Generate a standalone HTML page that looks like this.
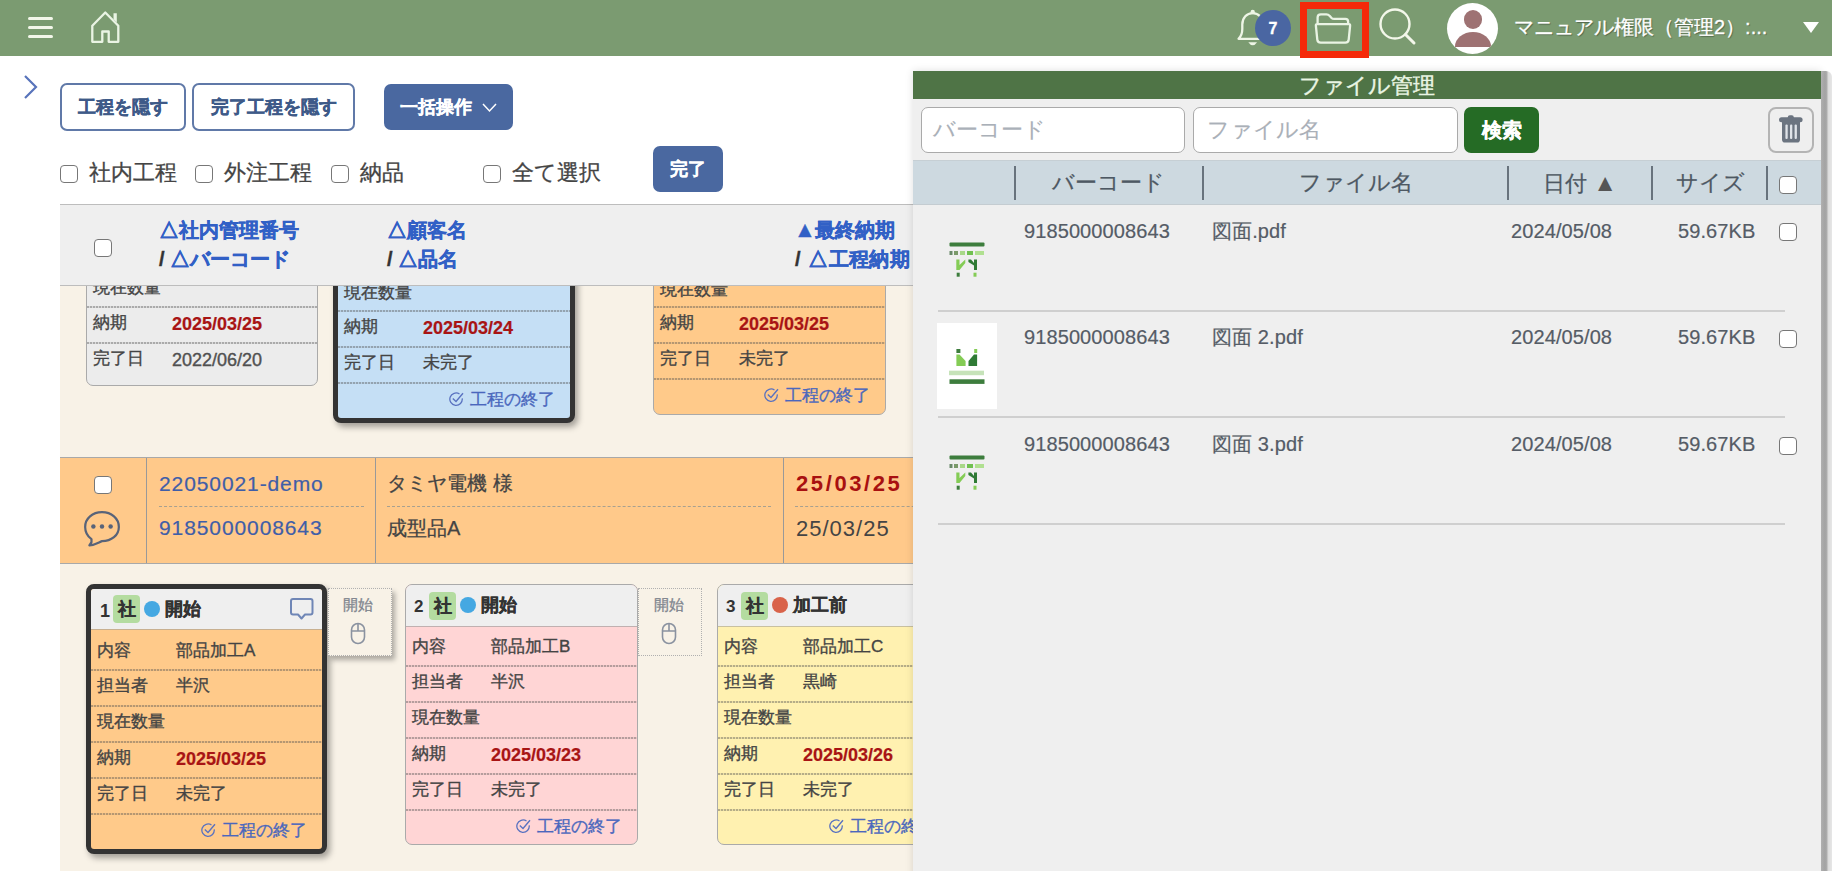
<!DOCTYPE html>
<html><head><meta charset="utf-8">
<style>
*{box-sizing:border-box;margin:0;padding:0}
html,body{width:1832px;height:871px;overflow:hidden;background:#fff;font-family:"Liberation Sans",sans-serif;color:#444}
.a{position:absolute}
#top{left:0;top:0;width:1832px;height:56px;background:#7b9b71}
.hb{left:28px;width:25px;height:2.6px;background:#f3f7ea;border-radius:2px}
.btno{border:2px solid #6079a8;border-radius:7px;background:#fff;color:#3e5a88;font-weight:bold;font-size:18px;text-align:center;line-height:44px;-webkit-text-stroke:0.4px #3e5a88}
.btnb{background:#4a68a0;border-radius:7px;color:#fff;font-weight:bold;font-size:18px;-webkit-text-stroke:0.3px #fff}
.cb{width:18px;height:18px;border:1.5px solid #777;border-radius:4px;background:#fff}
.lbl{font-size:22px;color:#444;line-height:22px;-webkit-text-stroke:0.3px #444}
.hdr{font-size:20px;font-weight:bold;color:#3160c6;line-height:20px;white-space:nowrap;-webkit-text-stroke:0.4px #3160c6}
.hdr i{font-style:normal;color:#333;-webkit-text-stroke:0.4px #333}
.card{border:1px solid #aaa;border-radius:7px;overflow:hidden}
.row{position:absolute;left:0;right:0;height:36px;font-size:17px;color:#444;white-space:nowrap;-webkit-text-stroke:0.35px #444}
.row::before{content:"";position:absolute;left:0;right:0;top:0;height:2px;background:repeating-linear-gradient(90deg,rgba(80,80,80,.42) 0 2px,rgba(80,80,80,.12) 2px 3px)}
.row.f::before{display:none}
.row.f .k,.row.f .v{top:9px}
.k{position:absolute;left:6px;top:8px;line-height:17px}
.v{position:absolute;left:85px;top:8px;line-height:17px}
.red{color:#a81414;font-weight:bold;font-size:18px;-webkit-text-stroke:0.2px #a81414}
.dt{font-size:18px;color:#555}
.v.red,.v.dt{top:10px}
.end{position:absolute;right:15px;top:9px;font-size:17px;color:#4a67bd;line-height:17px;-webkit-text-stroke:0.35px #4a67bd}
.ph{font-size:22px;color:#aab0b8;line-height:22px;-webkit-text-stroke:0.15px #aab0b8}
.th{font-size:22px;color:#4d5863;line-height:22px;white-space:nowrap;-webkit-text-stroke:0.25px #4d5863}
.sep{width:1.7px;height:34px;background:#68737d;top:166px}
.td{font-size:20px;color:#555c66;line-height:20px;white-space:nowrap;letter-spacing:0.1px;-webkit-text-stroke:0.2px #555c66}
</style></head><body>
<!-- top bar -->
<div id="top" class="a">
  <div class="a hb" style="top:17px"></div>
  <div class="a hb" style="top:26px"></div>
  <div class="a hb" style="top:35px"></div>
  <svg class="a" style="left:90px;top:10px" width="32" height="35" viewBox="0 0 32 35"><path d="M2.3 31.8V15.8L15.3 2.5L28.3 15.8V31.8H18.7V21.5H12.3V31.8Z" fill="none" stroke="#eaf4e4" stroke-width="2.3" stroke-linejoin="round"/><path d="M23.5 3.2H26.8V12.5L23.5 9.2Z" fill="#eaf4e4"/></svg>
  <!-- bell -->
  <svg class="a" style="left:1236px;top:9px" width="34" height="40" viewBox="0 0 34 40"><path d="M2.5 29.8C5 27.5 6.3 24.5 6.3 20V15.5C6.3 8.8 10.8 4.2 16.7 4.2C22.6 4.2 27 8.8 27 15.5V20C27 24.5 28.4 27.5 31 29.8Z" fill="none" stroke="#eef5e6" stroke-width="2.3" stroke-linejoin="round"/><path d="M12.3 33.2Q16.7 39.5 21.1 33.2Z" fill="#eef5e6"/><circle cx="16.7" cy="3" r="2.2" fill="#eef5e6"/></svg>
  <div class="a" style="left:1255px;top:10px;width:36px;height:36px;border-radius:50%;background:#4a66a2;color:#fff;font-weight:bold;font-size:16px;text-align:center;line-height:38px;-webkit-text-stroke:0.3px #fff">7</div>
  <div class="a" style="left:1300px;top:2px;width:69px;height:56px;border:7px solid #f52a0a"></div>
  <!-- folder -->
  <svg class="a" style="left:1314px;top:13px" width="38" height="32" viewBox="0 0 38 32"><path d="M3.6 10.6V4.6Q3.6 1.3 6.8 1.3H12.3Q14.3 1.3 15.8 3L17.3 4.7Q18.5 5.9 20.2 5.9H31.4Q34.1 5.9 34.1 8.6V10.6" fill="none" stroke="#eaf4e4" stroke-width="2.3" stroke-linejoin="round"/><path d="M3.2 11.1H34.8Q36.3 11.1 36.1 12.8L34.7 26.6Q34.4 29.6 31.3 29.6H6.7Q3.6 29.6 3.3 26.6L1.9 12.8Q1.7 11.1 3.2 11.1Z" fill="none" stroke="#eaf4e4" stroke-width="2.3" stroke-linejoin="round"/></svg>
  <!-- search -->
  <svg class="a" style="left:1378px;top:7px" width="40" height="40" viewBox="0 0 40 40"><circle cx="17" cy="17" r="14.5" fill="none" stroke="#f3f7ea" stroke-width="2.4"/><path d="M27.5 27.5L36 36" stroke="#f3f7ea" stroke-width="3" stroke-linecap="round"/></svg>
  <!-- avatar -->
  <div class="a" style="left:1447px;top:3px;width:51px;height:51px;border-radius:50%;background:#fff;overflow:hidden">
    <div class="a" style="left:16.5px;top:7px;width:18.5px;height:18.5px;border-radius:50%;background:#9e7273"></div>
    <div class="a" style="left:7.5px;top:29px;width:36.5px;height:14.8px;border-radius:50% 50% 0 0/100% 100% 0 0;background:#9e7273"></div>
  </div>
  <div class="a" style="left:1514px;top:16px;font-size:20px;line-height:22px;color:#fff;white-space:nowrap;text-shadow:1px 1px 1px rgba(0,0,0,.35);-webkit-text-stroke:0.3px #fff">マニュアル権限（管理2）:...</div>
  <svg class="a" style="left:1803px;top:22px" width="16" height="11" viewBox="0 0 16 11"><path d="M0 0H16L8 11Z" fill="#fff"/></svg>
</div>

<!-- side chevron -->
<svg class="a" style="left:22px;top:73px" width="18" height="28" viewBox="0 0 18 28"><path d="M3 3L14 14L3 25" fill="none" stroke="#5874bb" stroke-width="2.2"/></svg>

<!-- buttons -->
<div class="a btno" style="left:60px;top:83px;width:126px;height:48px">工程を隠す</div>
<div class="a btno" style="left:192px;top:83px;width:163px;height:48px">完了工程を隠す</div>
<div class="a btnb" style="left:384px;top:84px;width:129px;height:46px;line-height:46px;padding-left:16px">一括操作<svg style="position:absolute;left:98px;top:19px" width="15" height="10" viewBox="0 0 15 10"><path d="M1 1L7.5 8L14 1" fill="none" stroke="#fff" stroke-width="1.5"/></svg></div>

<div class="a cb" style="left:60px;top:165px"></div><div class="a lbl" style="left:89px;top:162px">社内工程</div>
<div class="a cb" style="left:195px;top:165px"></div><div class="a lbl" style="left:224px;top:162px">外注工程</div>
<div class="a cb" style="left:331px;top:165px"></div><div class="a lbl" style="left:360px;top:162px">納品</div>
<div class="a cb" style="left:483px;top:165px"></div><div class="a lbl" style="left:512px;top:162px">全て選択</div>
<div class="a btnb" style="left:653px;top:146px;width:70px;height:46px;line-height:46px;text-align:center">完了</div>

<!-- beige list area -->
<div class="a" style="left:60px;top:286px;width:860px;height:600px;background:#f8f2e7"></div>

<!-- top cards (scrolled) -->
<div class="a card" style="left:86px;top:250px;width:232px;height:136px;background:#ececec">
  <div class="row f" style="top:19px"><span class="k">現在数量</span></div>
  <div class="row" style="top:55px"><span class="k">納期</span><span class="v red">2025/03/25</span></div>
  <div class="row" style="top:91px"><span class="k">完了日</span><span class="v dt">2022/06/20</span></div>
</div>
<div class="a" style="left:333px;top:240px;width:242px;height:183px;background:#c5dff5;border:5px solid #333;border-radius:8px;overflow:hidden;box-shadow:3px 4px 6px rgba(0,0,0,.35)">
  <div class="row f" style="top:30px"><span class="k">現在数量</span></div>
  <div class="row" style="top:65px"><span class="k">納期</span><span class="v red">2025/03/24</span></div>
  <div class="row" style="top:101px"><span class="k">完了日</span><span class="v">未完了</span></div>
  <div class="row" style="top:137px"><span class="end"><svg width="15" height="15" viewBox="0 0 15 15" style="position:absolute;left:-21px;top:1px"><path d="M13.2 6.3A6.2 6.2 0 1 1 10.5 2" fill="none" stroke="#5a72c0" stroke-width="1.3"/><path d="M3.8 6.6L7 9.5L14 1.2" fill="none" stroke="#5a72c0" stroke-width="1.4"/></svg>工程の終了</span></div>
</div>
<div class="a card" style="left:653px;top:240px;width:233px;height:175px;background:#ffca8a">
  <div class="row f" style="top:31px"><span class="k">現在数量</span></div>
  <div class="row" style="top:65px"><span class="k">納期</span><span class="v red">2025/03/25</span></div>
  <div class="row" style="top:101px"><span class="k">完了日</span><span class="v">未完了</span></div>
  <div class="row" style="top:137px"><span class="end"><svg width="15" height="15" viewBox="0 0 15 15" style="position:absolute;left:-21px;top:1px"><path d="M13.2 6.3A6.2 6.2 0 1 1 10.5 2" fill="none" stroke="#5a72c0" stroke-width="1.3"/><path d="M3.8 6.6L7 9.5L14 1.2" fill="none" stroke="#5a72c0" stroke-width="1.4"/></svg>工程の終了</span></div>
</div>

<!-- table header -->
<div class="a" style="left:60px;top:204px;width:860px;height:82px;background:#efefef;border-top:1.5px solid #bdbdbd;border-bottom:1.5px solid #bdbdbd">
  <div class="a cb" style="left:34px;top:34px"></div>
  <div class="a hdr" style="left:99px;top:15px">△社内管理番号</div>
  <div class="a hdr" style="left:99px;top:44px"><i>/</i> △バーコード</div>
  <div class="a hdr" style="left:327px;top:15px">△顧客名</div>
  <div class="a hdr" style="left:327px;top:44px"><i>/</i> △品名</div>
  <div class="a hdr" style="left:734px;top:15px"><span style="font-size:22px;display:inline-block;margin-right:-1px">▲</span>最終納期</div>
  <div class="a hdr" style="left:735px;top:44px"><i>/</i> <span style="margin-left:2px;letter-spacing:0.4px">△工程納期</span></div>
</div>

<!-- orange row -->
<div class="a" style="left:60px;top:457px;width:860px;height:107px;background:#ffc98a;border-top:1.5px solid #a9a9a9;border-bottom:1.5px solid #a9a9a9">
  <div class="a cb" style="left:34px;top:18px"></div>
  <svg class="a" style="left:22px;top:51px" width="40" height="38" viewBox="0 0 38 36"><path d="M9 31.5L7 34.5C13 34 16 31.5 19 30.5C28 30.5 35 25 35 17C35 9 28 3 19 3C10 3 3 9 3 17C3 22 5.5 26 9 28.5Z" fill="none" stroke="#586379" stroke-width="2.1" stroke-linejoin="round"/><circle cx="10.8" cy="16.5" r="2.1" fill="#586379"/><circle cx="19" cy="16.5" r="2.1" fill="#586379"/><circle cx="27.2" cy="16.5" r="2.1" fill="#586379"/></svg>
  <div class="a" style="left:86px;top:0;width:1px;height:105px;background:#999"></div>
  <div class="a" style="left:315px;top:0;width:1px;height:105px;background:#999"></div>
  <div class="a" style="left:723px;top:0;width:1px;height:105px;background:#999"></div>
  <div class="a" style="left:99px;top:15px;font-size:21px;line-height:21px;color:#3f5ea8;white-space:nowrap;letter-spacing:0.9px;-webkit-text-stroke:0.2px #3f5ea8">22050021-demo</div>
  <div class="a" style="left:99px;top:48px;width:205px;border-top:1px dashed #a8a090"></div>
  <div class="a" style="left:99px;top:60px;font-size:21px;line-height:21px;color:#3f5ea8;letter-spacing:0.9px;margin-top:-1px;-webkit-text-stroke:0.2px #3f5ea8">9185000008643</div>
  <div class="a" style="left:327px;top:15px;font-size:20px;line-height:21px;color:#444;white-space:nowrap;-webkit-text-stroke:0.25px #444">タミヤ電機 様</div>
  <div class="a" style="left:327px;top:48px;width:384px;border-top:1px dashed #a8a090"></div>
  <div class="a" style="left:327px;top:60px;font-size:20px;line-height:21px;color:#444;-webkit-text-stroke:0.25px #444">成型品A</div>
  <div class="a" style="left:736px;top:15px;font-size:22px;line-height:21px;color:#a81010;font-weight:bold;white-space:nowrap;letter-spacing:2.6px">25/03/25</div>
  <div class="a" style="left:735px;top:48px;width:140px;border-top:1px dashed #a8a090"></div>
  <div class="a" style="left:736px;top:60px;font-size:22px;line-height:21px;color:#444;white-space:nowrap;letter-spacing:1px">25/03/25</div>
</div>

<!-- bottom cards -->
<div class="a" style="left:86px;top:584px;width:241px;height:270px;background:#ffca8a;border:5px solid #333;border-radius:8px;overflow:hidden;box-shadow:3px 4px 6px rgba(0,0,0,.35)">
  <div class="a" style="left:0;top:0;width:100%;height:41px;background:#efefef;border-bottom:1px solid #c8b090"></div>
  <div class="a" style="left:9px;top:13px;font-size:18px;font-weight:bold;color:#333;line-height:18px">1</div>
  <div class="a" style="left:22px;top:6px;width:27px;height:28px;background:#b4dca0;border-radius:4px;font-size:18px;font-weight:bold;color:#333;text-align:center;line-height:28px;-webkit-text-stroke:0.3px #333">社</div>
  <div class="a" style="left:53px;top:12px;width:16px;height:16px;border-radius:50%;background:#45a8e2"></div>
  <div class="a" style="left:74px;top:11px;font-size:18px;font-weight:bold;color:#333;line-height:18px;-webkit-text-stroke:0.3px #333">開始</div>
  <svg class="a" style="left:198px;top:8px" width="26" height="25" viewBox="0 0 26 25"><path d="M4 2H21.5Q23.5 2 23.5 4V15.5Q23.5 17.5 21.5 17.5H16L12.5 21.5L9 17.5H4Q2 17.5 2 15.5V4Q2 2 4 2Z" fill="none" stroke="#6f86b6" stroke-width="2" stroke-linejoin="round"/></svg>
  <div class="row f" style="top:44px"><span class="k">内容</span><span class="v">部品加工A</span></div>
  <div class="row" style="top:80px"><span class="k">担当者</span><span class="v">半沢</span></div>
  <div class="row" style="top:116px"><span class="k">現在数量</span></div>
  <div class="row" style="top:152px"><span class="k">納期</span><span class="v red">2025/03/25</span></div>
  <div class="row" style="top:188px"><span class="k">完了日</span><span class="v">未完了</span></div>
  <div class="row" style="top:224px"><span class="end"><svg width="15" height="15" viewBox="0 0 15 15" style="position:absolute;left:-21px;top:1px"><path d="M13.2 6.3A6.2 6.2 0 1 1 10.5 2" fill="none" stroke="#5a72c0" stroke-width="1.3"/><path d="M3.8 6.6L7 9.5L14 1.2" fill="none" stroke="#5a72c0" stroke-width="1.4"/></svg>工程の終了</span></div>
</div>
<div class="a" style="left:328px;top:588px;width:64px;height:68px;background:#f8f2e7;border:1.5px dotted #b0b0b0;box-shadow:3px 4px 5px rgba(0,0,0,.3)">
  <div class="a" style="left:14px;top:9px;font-size:14.5px;color:#80858e;line-height:15px;-webkit-text-stroke:0.3px #80858e">開始</div>
  <svg class="a" style="left:21px;top:33px" width="16" height="23" viewBox="0 0 16 23"><rect x="1.5" y="1.5" width="13" height="20" rx="6.5" fill="none" stroke="#8a92a0" stroke-width="1.6"/><path d="M8 1.5V9M1.5 9H14.5" stroke="#8a92a0" stroke-width="1.6"/></svg>
</div>

<div class="a card" style="left:405px;top:584px;width:233px;height:261px;background:#ffd5d5">
  <div class="a" style="left:0;top:0;width:100%;height:42px;background:#efefef;border-bottom:1px solid #c0b0b0"></div>
  <div class="a" style="left:8px;top:13px;font-size:17px;font-weight:bold;color:#333;line-height:17px">2</div>
  <div class="a" style="left:23px;top:7px;width:27px;height:28px;background:#b4dca0;border-radius:4px;font-size:18px;font-weight:bold;color:#333;text-align:center;line-height:28px;-webkit-text-stroke:0.3px #333">社</div>
  <div class="a" style="left:54px;top:12px;width:16px;height:16px;border-radius:50%;background:#45a8e2"></div>
  <div class="a" style="left:75px;top:11px;font-size:18px;font-weight:bold;color:#333;line-height:18px;-webkit-text-stroke:0.3px #333">開始</div>
  <div class="row f" style="top:44px"><span class="k">内容</span><span class="v">部品加工B</span></div>
  <div class="row" style="top:80px"><span class="k">担当者</span><span class="v">半沢</span></div>
  <div class="row" style="top:116px"><span class="k">現在数量</span></div>
  <div class="row" style="top:152px"><span class="k">納期</span><span class="v red">2025/03/23</span></div>
  <div class="row" style="top:188px"><span class="k">完了日</span><span class="v">未完了</span></div>
  <div class="row" style="top:224px"><span class="end"><svg width="15" height="15" viewBox="0 0 15 15" style="position:absolute;left:-21px;top:1px"><path d="M13.2 6.3A6.2 6.2 0 1 1 10.5 2" fill="none" stroke="#5a72c0" stroke-width="1.3"/><path d="M3.8 6.6L7 9.5L14 1.2" fill="none" stroke="#5a72c0" stroke-width="1.4"/></svg>工程の終了</span></div>
</div>
<div class="a" style="left:638px;top:588px;width:64px;height:68px;border:1.5px dotted #b0b0b0">
  <div class="a" style="left:15px;top:9px;font-size:14.5px;color:#80858e;line-height:15px;-webkit-text-stroke:0.3px #80858e">開始</div>
  <svg class="a" style="left:22px;top:33px" width="16" height="23" viewBox="0 0 16 23"><rect x="1.5" y="1.5" width="13" height="20" rx="6.5" fill="none" stroke="#8a92a0" stroke-width="1.6"/><path d="M8 1.5V9M1.5 9H14.5" stroke="#8a92a0" stroke-width="1.6"/></svg>
</div>

<div class="a card" style="left:717px;top:584px;width:233px;height:261px;background:#fff1b0">
  <div class="a" style="left:0;top:0;width:100%;height:42px;background:#efefef;border-bottom:1px solid #c8c0a0"></div>
  <div class="a" style="left:8px;top:13px;font-size:17px;font-weight:bold;color:#333;line-height:17px">3</div>
  <div class="a" style="left:23px;top:7px;width:27px;height:28px;background:#b4dca0;border-radius:4px;font-size:18px;font-weight:bold;color:#333;text-align:center;line-height:28px;-webkit-text-stroke:0.3px #333">社</div>
  <div class="a" style="left:54px;top:12px;width:16px;height:16px;border-radius:50%;background:#d9634a"></div>
  <div class="a" style="left:75px;top:11px;font-size:18px;font-weight:bold;color:#333;line-height:18px;-webkit-text-stroke:0.3px #333">加工前</div>
  <div class="row f" style="top:44px"><span class="k">内容</span><span class="v">部品加工C</span></div>
  <div class="row" style="top:80px"><span class="k">担当者</span><span class="v">黒崎</span></div>
  <div class="row" style="top:116px"><span class="k">現在数量</span></div>
  <div class="row" style="top:152px"><span class="k">納期</span><span class="v red">2025/03/26</span></div>
  <div class="row" style="top:188px"><span class="k">完了日</span><span class="v">未完了</span></div>
  <div class="row" style="top:224px"><span class="end" style="right:auto;left:132px"><svg width="15" height="15" viewBox="0 0 15 15" style="position:absolute;left:-21px;top:1px"><path d="M13.2 6.3A6.2 6.2 0 1 1 10.5 2" fill="none" stroke="#5a72c0" stroke-width="1.3"/><path d="M3.8 6.6L7 9.5L14 1.2" fill="none" stroke="#5a72c0" stroke-width="1.4"/></svg>工程の終了</span></div>
</div>

<!-- file panel -->
<div class="a" style="left:1821px;top:71px;width:11px;height:800px;background:linear-gradient(90deg,#bcbcbc 0,#a6a6a6 4px,#b0b0b0 6px,#dcdcdc 7px,#e6e6e6 11px);border-radius:0 6px 0 0"></div>
<div class="a" style="left:913px;top:71px;width:908px;height:820px;background:#efefef;box-shadow:0 0 8px rgba(0,0,0,.13)">
  <div class="a" style="left:0;top:0;width:908px;height:28px;background:#4f7446"></div>
  <div class="a" style="left:386px;top:3px;font-size:22px;line-height:24px;color:#eaf6e4;-webkit-text-stroke:0.4px #eaf6e4">ファイル管理</div>
  <div class="a" style="left:8px;top:36px;width:264px;height:46px;background:#fff;border:1.5px solid #aaa;border-radius:7px"></div>
  <div class="a ph" style="left:20px;top:48px">バーコード</div>
  <div class="a" style="left:280px;top:36px;width:265px;height:46px;background:#fff;border:1.5px solid #aaa;border-radius:7px"></div>
  <div class="a ph" style="left:294px;top:48px">ファイル名</div>
  <div class="a" style="left:551px;top:36px;width:75px;height:46px;background:#256b25;border-radius:7px;color:#fff;font-weight:bold;font-size:19.5px;text-align:center;line-height:46px;-webkit-text-stroke:0.4px #fff">検索</div>
  <div class="a" style="left:855px;top:36px;width:46px;height:46px;border:2px solid #b4b4b4;border-radius:8px"></div>
  <svg class="a" style="left:865px;top:44px" width="26" height="30" viewBox="0 0 26 30"><rect x="1" y="2.3" width="23.6" height="5" rx="2.5" fill="#6b7480"/><rect x="9.8" y="0.3" width="6" height="4" rx="2" fill="#6b7480"/><path d="M4 7H22V24.5Q22 27.6 19 27.6H7Q4 27.6 4 24.5Z" fill="#6b7480"/><rect x="7.4" y="9.5" width="2.3" height="14.4" rx="1" fill="#dfe3e8"/><rect x="12" y="9.5" width="2.3" height="14.4" rx="1" fill="#dfe3e8"/><rect x="16.6" y="9.5" width="2.3" height="14.4" rx="1" fill="#dfe3e8"/></svg>
  <div class="a" style="left:0;top:89px;width:908px;height:45px;background:#cdd9e0;border-top:1.5px solid #c6cfd4;border-bottom:1.5px solid #c4ccd1"></div>
  <div class="a sep" style="left:101px;top:95px"></div>
  <div class="a sep" style="left:289px;top:95px"></div>
  <div class="a sep" style="left:594px;top:95px"></div>
  <div class="a sep" style="left:738px;top:95px"></div>
  <div class="a sep" style="left:853px;top:95px"></div>
  <div class="a th" style="left:139px;top:101px">バーコード</div>
  <div class="a th" style="left:386px;top:101px">ファイル名</div>
  <div class="a th" style="left:630px;top:101px">日付 <span style="color:#555;font-size:24px;-webkit-text-stroke:0">▲</span></div>
  <div class="a th" style="left:763px;top:101px">サイズ</div>
  <div class="a cb" style="left:866px;top:105px"></div>

  <!-- rows -->
  <div class="a" style="left:25px;top:239px;width:847px;height:1.5px;background:#cfcfcf"></div>
  <div class="a" style="left:25px;top:345px;width:847px;height:1.5px;background:#cfcfcf"></div>
  <div class="a" style="left:25px;top:452px;width:847px;height:1.5px;background:#cfcfcf"></div>

  <div class="a td" style="left:111px;top:150px">9185000008643</div>
  <div class="a td" style="left:299px;top:150px">図面.pdf</div>
  <div class="a td" style="left:598px;top:150px">2024/05/08</div>
  <div class="a td" style="left:765px;top:150px">59.67KB</div>
  <div class="a cb" style="left:866px;top:152px"></div>

  <div class="a td" style="left:111px;top:256px">9185000008643</div>
  <div class="a td" style="left:299px;top:256px">図面 2.pdf</div>
  <div class="a td" style="left:598px;top:256px">2024/05/08</div>
  <div class="a td" style="left:765px;top:256px">59.67KB</div>
  <div class="a cb" style="left:866px;top:259px"></div>

  <div class="a td" style="left:111px;top:363px">9185000008643</div>
  <div class="a td" style="left:299px;top:363px">図面 3.pdf</div>
  <div class="a td" style="left:598px;top:363px">2024/05/08</div>
  <div class="a td" style="left:765px;top:363px">59.67KB</div>
  <div class="a cb" style="left:866px;top:366px"></div>

  <!-- thumbs -->
  <svg class="a" style="left:36px;top:170px" width="36" height="36" viewBox="0 0 36 36"><rect x="0.5" y="1.5" width="35" height="4" rx="1" fill="#3d7d3d"/><rect x="0.5" y="10" width="3" height="4" fill="#6a8a6a"/><rect x="5" y="10" width="4" height="4" fill="#7a9a6a"/><rect x="11" y="10" width="5" height="4" fill="#a8d888"/><rect x="18" y="10" width="6" height="4" fill="#70c050"/><rect x="26" y="10" width="9" height="4" fill="#b0e090"/><path d="M7.3 18.6H10.5V24L16.3 18.6V22L10.5 29H7.3Z" fill="#84cc55"/><path d="M19.4 18.6H22L25 22V18.6H28V29H25V24.5L19.4 21Z" fill="#2f7a35"/><rect x="7.7" y="31.7" width="3" height="4" fill="#3d7d3d"/><rect x="24.5" y="31.7" width="3" height="4" fill="#84cc55"/></svg>
  <div class="a" style="left:24px;top:252px;width:60px;height:86px;background:#fff"></div>
  <svg class="a" style="left:36px;top:277px" width="36" height="36" viewBox="0 0 36 36"><rect x="7.4" y="1" width="4" height="4" fill="#3d7d3d"/><rect x="25.2" y="1" width="3" height="4" fill="#84cc55"/><path d="M7.4 6.6H10.5L16.6 13V18.1H7.4Z" fill="#84cc55"/><path d="M28.1 6.6H25L19.5 13V18.1H28.1Z" fill="#2f7a35"/><rect x="0" y="22.7" width="35" height="4.5" fill="#b8dca8" opacity=".8"/><rect x="0.5" y="31.3" width="35" height="4.6" fill="#3d7d3d"/></svg>
  <svg class="a" style="left:36px;top:383px" width="36" height="36" viewBox="0 0 36 36"><rect x="0.5" y="1.5" width="35" height="4" rx="1" fill="#3d7d3d"/><rect x="0.5" y="10" width="3" height="4" fill="#6a8a6a"/><rect x="5" y="10" width="4" height="4" fill="#7a9a6a"/><rect x="11" y="10" width="5" height="4" fill="#a8d888"/><rect x="18" y="10" width="6" height="4" fill="#70c050"/><rect x="26" y="10" width="9" height="4" fill="#b0e090"/><path d="M7.3 18.6H10.5V24L16.3 18.6V22L10.5 29H7.3Z" fill="#84cc55"/><path d="M19.4 18.6H22L25 22V18.6H28V29H25V24.5L19.4 21Z" fill="#2f7a35"/><rect x="7.7" y="31.7" width="3" height="4" fill="#3d7d3d"/><rect x="24.5" y="31.7" width="3" height="4" fill="#84cc55"/></svg>
</div>
</body></html>
